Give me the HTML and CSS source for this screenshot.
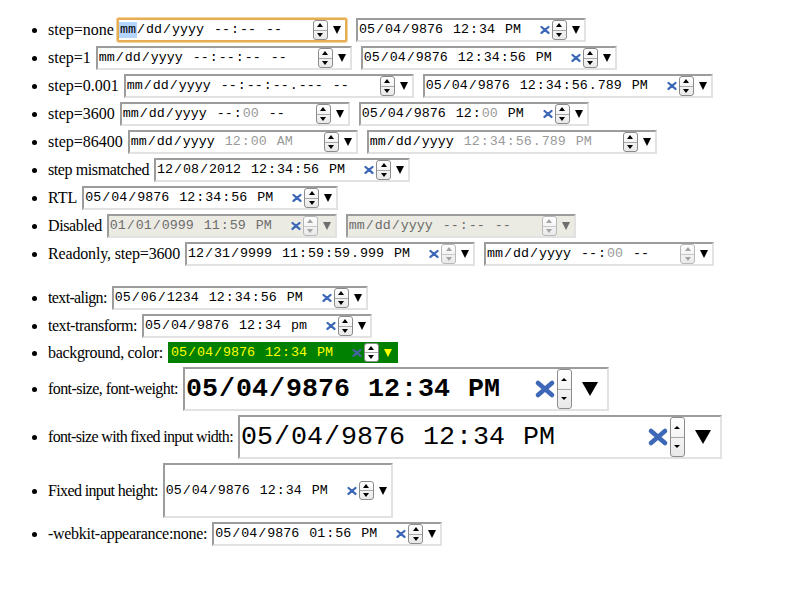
FILE: index.html
```html
<!DOCTYPE html>
<html>
<head>
<meta charset="utf-8">
<link rel="stylesheet" href="styles.css">
</head>
<body>
<ul class="first">
  <li><div class="row"><span class="lb l-none">step=none</span>
    <span class="dt w230 focus"><span class="txt"><span class="f sel">mm</span>/<span class="f">dd</span>/<span class="f">yyyy</span> <span class="f">--</span>:<span class="f">--</span> <span class="f">--</span></span><span class="spin"><i class="up"></i><i class="dn"></i></span><span class="drop"></span></span>
    <span class="dt w230"><span class="txt"><span class="f">05</span>/<span class="f">04</span>/<span class="f">9876</span> <span class="f">12</span>:<span class="f">34</span> <span class="f">PM</span></span><span class="clr"><svg viewBox="0 0 10 8"><path d="M1.5 1L8.5 7M8.5 1L1.5 7"/></svg></span><span class="spin"><i class="up"></i><i class="dn"></i></span><span class="drop"></span></span>
  </div></li>
  <li><div class="row"><span class="lb">step=1</span>
    <span class="dt w256"><span class="txt"><span class="f">mm</span>/<span class="f">dd</span>/<span class="f">yyyy</span> <span class="f">--</span>:<span class="f">--</span>:<span class="f">--</span> <span class="f">--</span></span><span class="spin"><i class="up"></i><i class="dn"></i></span><span class="drop"></span></span>
    <span class="dt w256"><span class="txt"><span class="f">05</span>/<span class="f">04</span>/<span class="f">9876</span> <span class="f">12</span>:<span class="f">34</span>:<span class="f">56</span> <span class="f">PM</span></span><span class="clr"><svg viewBox="0 0 10 8"><path d="M1.5 1L8.5 7M8.5 1L1.5 7"/></svg></span><span class="spin"><i class="up"></i><i class="dn"></i></span><span class="drop"></span></span>
  </div></li>
  <li><div class="row"><span class="lb">step=0.001</span>
    <span class="dt w290"><span class="txt"><span class="f">mm</span>/<span class="f">dd</span>/<span class="f">yyyy</span> <span class="f">--</span>:<span class="f">--</span>:<span class="f">--</span>.<span class="f">---</span> <span class="f">--</span></span><span class="spin"><i class="up"></i><i class="dn"></i></span><span class="drop"></span></span>
    <span class="dt w290"><span class="txt"><span class="f">05</span>/<span class="f">04</span>/<span class="f">9876</span> <span class="f">12</span>:<span class="f">34</span>:<span class="f">56</span>.<span class="f">789</span> <span class="f">PM</span></span><span class="clr"><svg viewBox="0 0 10 8"><path d="M1.5 1L8.5 7M8.5 1L1.5 7"/></svg></span><span class="spin"><i class="up"></i><i class="dn"></i></span><span class="drop"></span></span>
  </div></li>
  <li><div class="row"><span class="lb">step=3600</span>
    <span class="dt w230"><span class="txt"><span class="f">mm</span>/<span class="f">dd</span>/<span class="f">yyyy</span> <span class="f">--</span>:<span class="f g">00</span> <span class="f">--</span></span><span class="spin"><i class="up"></i><i class="dn"></i></span><span class="drop"></span></span>
    <span class="dt w230"><span class="txt"><span class="f">05</span>/<span class="f">04</span>/<span class="f">9876</span> <span class="f">12</span>:<span class="f g">00</span> <span class="f">PM</span></span><span class="clr"><svg viewBox="0 0 10 8"><path d="M1.5 1L8.5 7M8.5 1L1.5 7"/></svg></span><span class="spin"><i class="up"></i><i class="dn"></i></span><span class="drop"></span></span>
  </div></li>
  <li><div class="row"><span class="lb">step=86400</span>
    <span class="dt w230"><span class="txt"><span class="f">mm</span>/<span class="f">dd</span>/<span class="f">yyyy</span> <span class="g"><span class="f">12</span>:<span class="f">00</span> <span class="f">AM</span></span></span><span class="spin"><i class="up"></i><i class="dn"></i></span><span class="drop"></span></span>
    <span class="dt w290"><span class="txt"><span class="f">mm</span>/<span class="f">dd</span>/<span class="f">yyyy</span> <span class="g"><span class="f">12</span>:<span class="f">34</span>:<span class="f">56</span>.<span class="f">789</span> <span class="f">PM</span></span></span><span class="spin"><i class="up"></i><i class="dn"></i></span><span class="drop"></span></span>
  </div></li>
  <li><div class="row"><span class="lb l-mis">step mismatched</span>
    <span class="dt w256"><span class="txt"><span class="f">12</span>/<span class="f">08</span>/<span class="f">2012</span> <span class="f">12</span>:<span class="f">34</span>:<span class="f">56</span> <span class="f">PM</span></span><span class="clr"><svg viewBox="0 0 10 8"><path d="M1.5 1L8.5 7M8.5 1L1.5 7"/></svg></span><span class="spin"><i class="up"></i><i class="dn"></i></span><span class="drop"></span></span>
  </div></li>
  <li><div class="row"><span class="lb">RTL</span>
    <span class="dt w256"><span class="txt"><span class="f">05</span>/<span class="f">04</span>/<span class="f">9876</span> <span class="f">12</span>:<span class="f">34</span>:<span class="f">56</span> <span class="f">PM</span></span><span class="clr"><svg viewBox="0 0 10 8"><path d="M1.5 1L8.5 7M8.5 1L1.5 7"/></svg></span><span class="spin"><i class="up"></i><i class="dn"></i></span><span class="drop"></span></span>
  </div></li>
  <li><div class="row"><span class="lb l-dis">Disabled</span>
    <span class="dt w230 dis"><span class="txt"><span class="f">01</span>/<span class="f">01</span>/<span class="f">0999</span> <span class="f">11</span>:<span class="f">59</span> <span class="f">PM</span></span><span class="clr"><svg viewBox="0 0 10 8"><path d="M1.5 1L8.5 7M8.5 1L1.5 7"/></svg></span><span class="spin"><i class="up"></i><i class="dn"></i></span><span class="drop"></span></span>
    <span class="dt w230 dis"><span class="txt"><span class="f">mm</span>/<span class="f">dd</span>/<span class="f">yyyy</span> <span class="f">--</span>:<span class="f">--</span> <span class="f">--</span></span><span class="spin"><i class="up"></i><i class="dn"></i></span><span class="drop"></span></span>
  </div></li>
  <li><div class="row"><span class="lb l-ro">Readonly, step=3600</span>
    <span class="dt w290 ro"><span class="txt"><span class="f">12</span>/<span class="f">31</span>/<span class="f">9999</span> <span class="f">11</span>:<span class="f">59</span>:<span class="f">59</span>.<span class="f">999</span> <span class="f">PM</span></span><span class="clr"><svg viewBox="0 0 10 8"><path d="M1.5 1L8.5 7M8.5 1L1.5 7"/></svg></span><span class="spin"><i class="up"></i><i class="dn"></i></span><span class="drop"></span></span>
    <span class="dt w230 ro"><span class="txt"><span class="f">mm</span>/<span class="f">dd</span>/<span class="f">yyyy</span> <span class="f">--</span>:<span class="f g">00</span> <span class="f">--</span></span><span class="spin"><i class="up"></i><i class="dn"></i></span><span class="drop"></span></span>
  </div></li>
</ul>
<ul>
  <li><div class="row"><span class="lb l-ta">text-align:</span>
    <span class="dt w256"><span class="txt"><span class="f">05</span>/<span class="f">06</span>/<span class="f">1234</span> <span class="f">12</span>:<span class="f">34</span>:<span class="f">56</span> <span class="f">PM</span></span><span class="clr"><svg viewBox="0 0 10 8"><path d="M1.5 1L8.5 7M8.5 1L1.5 7"/></svg></span><span class="spin"><i class="up"></i><i class="dn"></i></span><span class="drop"></span></span>
  </div></li>
  <li><div class="row"><span class="lb l-tt">text-transform:</span>
    <span class="dt w230"><span class="txt"><span class="f">05</span>/<span class="f">04</span>/<span class="f">9876</span> <span class="f">12</span>:<span class="f">34</span> <span class="f">pm</span></span><span class="clr"><svg viewBox="0 0 10 8"><path d="M1.5 1L8.5 7M8.5 1L1.5 7"/></svg></span><span class="spin"><i class="up"></i><i class="dn"></i></span><span class="drop"></span></span>
  </div></li>
  <li><div class="row"><span class="lb l-bg">background, color:</span>
    <span class="dt w230 green"><span class="txt"><span class="f">05</span>/<span class="f">04</span>/<span class="f">9876</span> <span class="f">12</span>:<span class="f">34</span> <span class="f">PM</span></span><span class="clr"><svg viewBox="0 0 10 8"><path d="M1.5 1L8.5 7M8.5 1L1.5 7"/></svg></span><span class="spin"><i class="up"></i><i class="dn"></i></span><span class="drop"></span></span>
  </div></li>
  <li><div class="row"><span class="lb l-fs">font-size, font-weight:</span>
    <span class="dt w426 big bold"><span class="txt"><span class="f">05</span>/<span class="f">04</span>/<span class="f">9876</span> <span class="f">12</span>:<span class="f">34</span> <span class="f">PM</span></span><span class="clr"><svg viewBox="0 0 10 8"><path d="M1.5 1L8.5 7M8.5 1L1.5 7"/></svg></span><span class="spin"><i class="up"></i><i class="dn"></i></span><span class="drop"></span></span>
  </div></li>
  <li><div class="row"><span class="lb l-fw">font-size with fixed input width:</span>
    <span class="dt w484 big"><span class="txt"><span class="f">05</span>/<span class="f">04</span>/<span class="f">9876</span> <span class="f">12</span>:<span class="f">34</span> <span class="f">PM</span></span><span class="clr"><svg viewBox="0 0 10 8"><path d="M1.5 1L8.5 7M8.5 1L1.5 7"/></svg></span><span class="spin"><i class="up"></i><i class="dn"></i></span><span class="drop"></span></span>
  </div></li>
  <li><div class="row"><span class="lb l-fh">Fixed input height:</span>
    <span class="dt w230 tall"><span class="txt"><span class="f">05</span>/<span class="f">04</span>/<span class="f">9876</span> <span class="f">12</span>:<span class="f">34</span> <span class="f">PM</span></span><span class="clr"><svg viewBox="0 0 10 8"><path d="M1.5 1L8.5 7M8.5 1L1.5 7"/></svg></span><span class="spin"><i class="up"></i><i class="dn"></i></span><span class="drop"></span></span>
  </div></li>
  <li><div class="row"><span class="lb l-wa">-webkit-appearance:none:</span>
    <span class="dt w230"><span class="txt"><span class="f">05</span>/<span class="f">04</span>/<span class="f">9876</span> <span class="f">01</span>:<span class="f">56</span> <span class="f">PM</span></span><span class="clr"><svg viewBox="0 0 10 8"><path d="M1.5 1L8.5 7M8.5 1L1.5 7"/></svg></span><span class="spin"><i class="up"></i><i class="dn"></i></span><span class="drop"></span></span>
  </div></li>
</ul>
</body>
</html>
```

FILE: styles.css
```css
body {
  margin: 8px;
  font-family: "Liberation Serif", "Times New Roman", serif;
  font-size: 16px;
  color: #000;
  background: #fff;
}

ul {
  margin: 16px 0;
  padding-left: 40px;
}

ul.first {
  margin-top: 8px;
}

.row {
  display: flex;
  align-items: center;
}

.lb {
  white-space: nowrap;
  margin-right: 5px;
  line-height: 18px;
}

.l-none { margin-right: 3px; }
.l-mis { letter-spacing: -0.4px; }
.l-dis { letter-spacing: -0.38px; }
.l-ro { letter-spacing: -0.16px; }
.l-ta { letter-spacing: -0.64px; }
.l-tt { letter-spacing: -0.47px; }
.l-bg { letter-spacing: -0.33px; }
.l-fs { letter-spacing: -0.57px; }
.l-fw { letter-spacing: -0.67px; }
.l-fh { letter-spacing: -0.63px; }
.l-wa { letter-spacing: -0.29px; }

.dt {
  display: flex;
  align-items: center;
  box-sizing: border-box;
  height: 24px;
  margin: 2px 0;
  border: 2px solid;
  border-color: #9c9c9c #e2e2e2 #e2e2e2 #9c9c9c;
  background: #fff;
  font-family: "Liberation Mono", "Courier New", monospace;
  font-size: 13.333px;
  color: #000;
  flex: none;
}

.dt + .dt {
  margin-left: 9px;
}

.w230 { width: 230px; }
.w256 { width: 256px; }
.w290 { width: 290px; }
.w426 { width: 426px; }
.w484 { width: 484px; }

.txt {
  flex: 1;
  white-space: pre;
  line-height: 1.2;
  overflow: hidden;
}

.f {
  padding: 0 1px;
}

.g {
  color: #9a9a9a;
}

.sel {
  background: #b4d5fc;
  padding-top: 1px;
  padding-bottom: 1px;
}

.focus {
  border-color: #e6ad55;
  border-radius: 2px;
  box-shadow: 0 0 0 1px #f3d49e;
}

.clr {
  display: flex;
  width: 0.75em;
  height: 0.6em;
  margin-right: 2px;
  color: #3d68b7;
  flex: none;
}

.clr svg {
  width: 100%;
  height: 100%;
  overflow: visible;
}

.clr path {
  fill: none;
  stroke: currentColor;
  stroke-width: 2.3;
  stroke-linecap: round;
}

.spin {
  display: flex;
  flex-direction: column;
  box-sizing: border-box;
  width: 15px;
  height: 1.5em;
  border: 1px solid #8c8c8c;
  border-radius: 3px;
  background: linear-gradient(#ffffff, #e9e9e9);
  flex: none;
}

.spin i {
  flex: 1;
  display: flex;
  align-items: center;
  justify-content: center;
}

.spin i::before {
  content: "";
  border-left: 3.5px solid transparent;
  border-right: 3.5px solid transparent;
}

.spin .up::before {
  border-bottom: 4px solid #000;
}

.spin .dn {
  border-top: 1px solid #a8a8a8;
}

.spin .dn::before {
  border-top: 4px solid #000;
}

.big .spin i::before {
  border-left-width: 3px;
  border-right-width: 3px;
}

.big .spin .up::before {
  border-bottom-width: 3px;
}

.big .spin .dn::before {
  border-top-width: 3px;
}

.drop {
  flex: none;
  width: 0;
  height: 0;
  margin-left: 5px;
  margin-right: 4px;
  border-left: 4.5px solid transparent;
  border-right: 4.5px solid transparent;
  border-top: 8px solid #000;
}

.big .drop {
  margin-left: 10px;
  margin-right: 9px;
  border-left-width: 8px;
  border-right-width: 8px;
  border-top-width: 14px;
}

.dis {
  background: #ebebe4;
  color: #6d6d6d;
}

.dis .spin,
.ro .spin {
  border-color: #b9b9b9;
}

.dis .spin .up::before,
.ro .spin .up::before {
  border-bottom-color: #a3a3a3;
}

.dis .spin .dn::before,
.ro .spin .dn::before {
  border-top-color: #a3a3a3;
}

.dis .spin .dn,
.ro .spin .dn {
  border-top-color: #c8c8c8;
}

.dis .drop {
  border-top-color: #6d6d6d;
}

.green {
  background: #008000;
  color: #ffff00;
  border: none;
  height: 21px;
  padding: 0 2px;
}

.green .clr {
  color: #44639e;
}

.green .spin {
  background: #fff;
  height: 19px;
}

.green .drop {
  border-top-color: #ffff00;
}

.big {
  font-size: 26.667px;
  height: 44px;
}

.bold {
  font-weight: bold;
}

.tall {
  height: 55px;
}
```
